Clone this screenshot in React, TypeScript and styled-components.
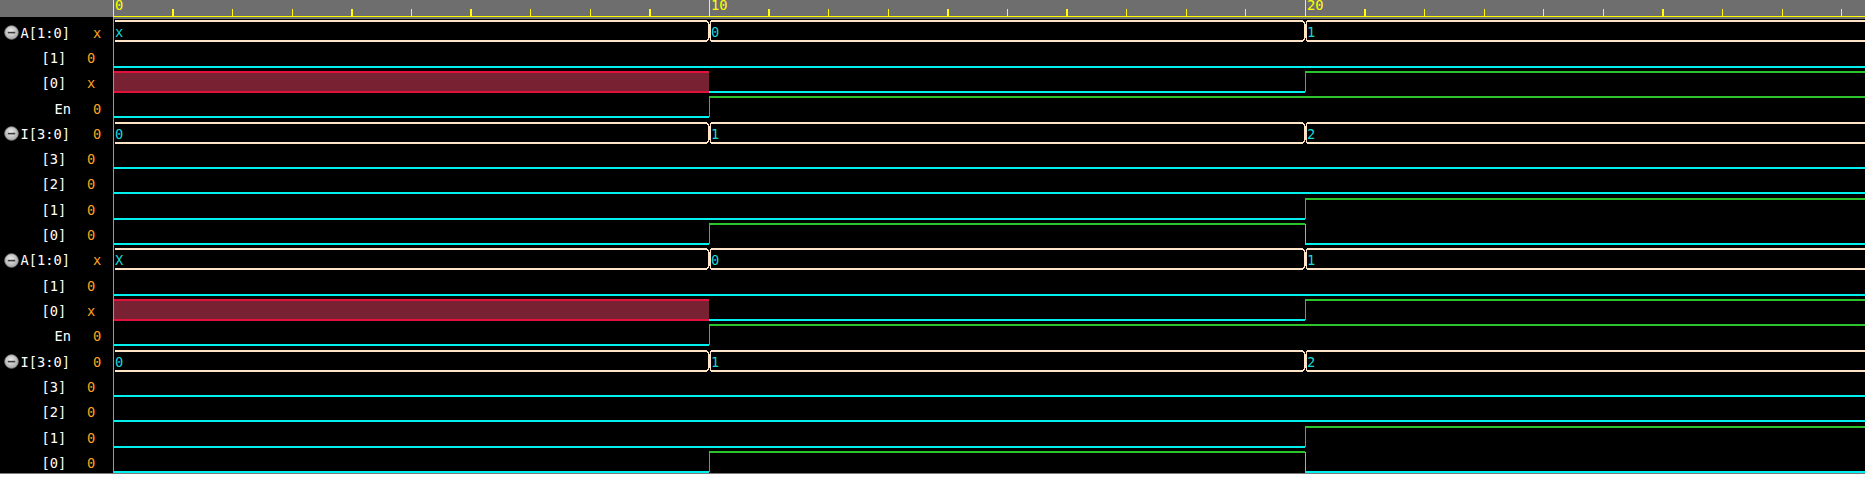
import React from "react";
import styled, { createGlobalStyle } from "styled-components";

const ROW_H = 25.333;
const HEAD_H = 17.333;
const HI = 4;
const LO = 24;
const PX_PER_T = 59.63;
const T0 = -0.5;
const WAVE_W = 1752;
const SW = 1.33;
const xAt = (t: number) => T0 + t * PX_PER_T;

const FONT = `"DejaVu Sans Mono", "Liberation Mono", monospace`;

const C = {
  bus: "#ffe3c6",
  low: "#00f0f0",
  high: "#2cc42c",
  xFill: "#772132",
  xEdge: "#e2123c",
  busText: "#1ad8d8",
  ruler: "#ffff00",
  head: "#6e6e6e",
  name: "#ffffff",
  value: "#ffa41c",
  split: "#c8913a",
};

type Seg = [number, string];
type Sig = {
  name: string;
  value: string;
  bus?: boolean;
  toggle?: boolean;
  indent: number;
  width: number;
  segs: Seg[];
};

const group = (ax: string): Sig[] => [
  { name: "A[1:0]", value: "x", bus: true, toggle: true, indent: 4, width: 93, segs: [[0, ax], [10, "0"], [20, "1"]] },
  { name: "[1]", value: "0", indent: 41.5, width: 87, segs: [[0, "0"]] },
  { name: "[0]", value: "x", indent: 41.5, width: 87, segs: [[0, "x"], [10, "0"], [20, "1"]] },
  { name: "En", value: "0", indent: 54.5, width: 93, segs: [[0, "0"], [10, "1"]] },
  { name: "I[3:0]", value: "0", bus: true, toggle: true, indent: 4, width: 93, segs: [[0, "0"], [10, "1"], [20, "2"]] },
  { name: "[3]", value: "0", indent: 41.5, width: 87, segs: [[0, "0"]] },
  { name: "[2]", value: "0", indent: 41.5, width: 87, segs: [[0, "0"]] },
  { name: "[1]", value: "0", indent: 41.5, width: 87, segs: [[0, "0"], [20, "1"]] },
  { name: "[0]", value: "0", indent: 41.5, width: 87, segs: [[0, "0"], [10, "1"], [20, "0"]] },
];

const signals: Sig[] = [...group("x"), ...group("X")];

const GlobalStyle = createGlobalStyle`
  html, body { margin: 0; padding: 0; background: #ffffff; }
  body { font-family: ${FONT}; }
`;

const Frame = styled.div`
  display: flex;
  height: ${HEAD_H + ROW_H * 18}px;
  background: #000;
  border-bottom: 1px solid #7c7c7c;
  overflow: hidden;
`;

const NamePane = styled.div`
  display: flex;
  flex-direction: column;
  flex: none;
  width: 114px;
`;

const NameHeader = styled.div`
  height: ${HEAD_H}px;
  flex: none;
  background: ${C.head};
  border-right: 1px solid ${C.ruler};
`;

const NameList = styled.div`
  flex: 1;
  display: flex;
  flex-direction: column;
  border-right: 1px solid ${C.split};
`;

const LabelRow = styled.div`
  display: flex;
  align-items: center;
  flex: none;
  height: ${ROW_H}px;
  box-sizing: border-box;
  padding-top: 6.2px;
  line-height: 19.13px;
  font-family: ${FONT};
  font-size: 13.7px;
  white-space: nowrap;
`;

const NameCell = styled.div<{ $indent: number; $width: number }>`
  display: flex;
  align-items: center;
  flex: none;
  width: ${(p) => p.$width}px;
  padding-left: ${(p) => p.$indent}px;
  box-sizing: border-box;
  color: ${C.name};
`;

const Value = styled.span`
  color: ${C.value};
`;

const ToggleIcon = styled.svg`
  flex: none;
  width: 15px;
  height: 15px;
  margin: -2px 1.5px 0 0;
`;

const WavePane = styled.div`
  flex: 1;
  display: flex;
  flex-direction: column;
  min-width: 0;
`;

const Ruler = styled.div`
  position: relative;
  flex: none;
  height: ${HEAD_H}px;
  background: ${C.head};
  &::after {
    content: "";
    position: absolute;
    left: 0;
    right: 0;
    top: 100%;
    height: 1.7px;
    background: ${C.head};
  }
`;

const WaveRow = styled.div`
  flex: none;
  height: ${ROW_H}px;
`;

const Drawing = styled.svg`
  display: block;
  width: 100%;
  height: 100%;
  shape-rendering: crispEdges;
`;

const Label = styled.text`
  font-family: ${FONT};
  font-size: 13.7px;
`;

function Toggle() {
  return (
    <ToggleIcon viewBox="0 0 15 15">
      <defs>
        <radialGradient id="tg" cx="45%" cy="40%" r="60%">
          <stop offset="0%" stopColor="#ececec" />
          <stop offset="100%" stopColor="#a9a9a9" />
        </radialGradient>
      </defs>
      <circle cx="7.5" cy="7.5" r="6.8" fill="url(#tg)" stroke="#8a8a8a" strokeWidth="0.8" />
      <rect x="3.8" y="6.8" width="7.4" height="1.6" fill="#3c3c3c" />
    </ToggleIcon>
  );
}

function TimeRuler() {
  const ticks = Array.from({ length: 30 }, (_, t) => t);
  return (
    <Drawing viewBox={`0 0 ${WAVE_W} ${HEAD_H}`} preserveAspectRatio="xMinYMin meet" width={WAVE_W}>
      {ticks.map((t) => {
        const x = xAt(t);
        const major = t % 10 === 0;
        return (
          <g key={t}>
            <line x1={x} x2={x} y1={major ? 0 : 9} y2={16} stroke={C.ruler} strokeWidth={SW} />
            {major && (
              <Label x={x + 1.5} y={10.4} fill={C.ruler}>
                {t}
              </Label>
            )}
          </g>
        );
      })}
      <line x1={0} x2={WAVE_W} y1={16.6} y2={16.6} stroke={C.ruler} strokeWidth={SW} />
    </Drawing>
  );
}

function BitWave({ segs }: { segs: Seg[] }) {
  const parts: React.ReactNode[] = [];
  segs.forEach(([t, v], i) => {
    const x1 = i === 0 ? 0 : xAt(t);
    const x2 = i < segs.length - 1 ? xAt(segs[i + 1][0]) : WAVE_W;
    const prev = i > 0 ? segs[i - 1][1] : null;
    if (v === "x") {
      parts.push(<rect key={`f${i}`} x={x1} y={HI} width={x2 - x1} height={LO - HI} fill={C.xFill} />);
      parts.push(<line key={`t${i}`} x1={x1} x2={x2} y1={HI} y2={HI} stroke={C.xEdge} strokeWidth={SW} />);
      parts.push(<line key={`b${i}`} x1={x1} x2={x2} y1={LO} y2={LO} stroke={C.xEdge} strokeWidth={SW} />);
      return;
    }
    const y = v === "1" ? HI : LO;
    const col = v === "1" ? C.high : C.low;
    parts.push(<line key={`h${i}`} x1={x1} x2={x2} y1={y} y2={y} stroke={col} strokeWidth={SW} />);
    if (prev !== null && prev !== "x" && prev !== v) {
      parts.push(<line key={`v${i}`} x1={x1} x2={x1} y1={HI} y2={LO} stroke={col} strokeWidth={SW} />);
    }
  });
  return <>{parts}</>;
}

function BusWave({ segs }: { segs: Seg[] }) {
  const parts: React.ReactNode[] = [];
  segs.forEach(([t, v], i) => {
    const first = i === 0;
    const last = i === segs.length - 1;
    const x1 = first ? 1 : xAt(t) + 2;
    const x2 = last ? WAVE_W : xAt(segs[i + 1][0]) - 2;
    parts.push(<line key={`t${i}`} x1={x1} x2={x2} y1={HI} y2={HI} stroke={C.bus} strokeWidth={SW} />);
    parts.push(<line key={`b${i}`} x1={x1} x2={x2} y1={LO} y2={LO} stroke={C.bus} strokeWidth={SW} />);
    if (!first) {
      const x = xAt(t);
      const d = `M${x - 2} ${HI} L${x - 0.6} ${HI + 3} L${x - 0.6} ${LO - 3} L${x - 2} ${LO} M${x + 2} ${HI} L${x + 0.6} ${HI + 3} L${x + 0.6} ${LO - 3} L${x + 2} ${LO}`;
      parts.push(<path key={`x${i}`} d={d} fill="none" stroke={C.bus} strokeWidth={SW} />);
    }
    parts.push(
      <Label key={`l${i}`} x={first ? 1 : xAt(t) + 1.6} y={19.7} fill={C.busText}>
        {v}
      </Label>
    );
  });
  return <>{parts}</>;
}

export default function App() {
  return (
    <>
      <GlobalStyle />
      <Frame>
        <NamePane>
          <NameHeader />
          <NameList>
            {signals.map((s, i) => (
              <LabelRow key={i}>
                <NameCell $indent={s.indent} $width={s.width}>
                  {s.toggle && <Toggle />}
                  <span>{s.name}</span>
                </NameCell>
                <Value>{s.value}</Value>
              </LabelRow>
            ))}
          </NameList>
        </NamePane>
        <WavePane>
          <Ruler>
            <TimeRuler />
          </Ruler>
          {signals.map((s, i) => (
            <WaveRow key={i}>
              <Drawing viewBox={`0 0 ${WAVE_W} ${ROW_H}`} preserveAspectRatio="xMinYMin meet" width={WAVE_W}>
                {s.bus ? <BusWave segs={s.segs} /> : <BitWave segs={s.segs} />}
              </Drawing>
            </WaveRow>
          ))}
        </WavePane>
      </Frame>
    </>
  );
}
